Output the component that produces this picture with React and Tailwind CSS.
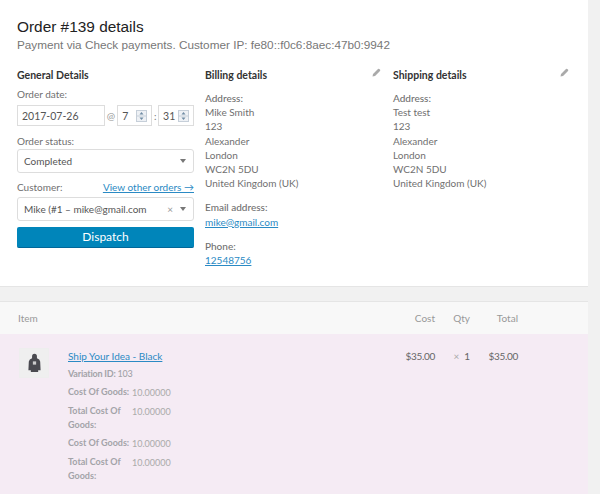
import React from "react";

const body = "font-['Lato',sans-serif]";

function Pencil() {
  return (
    <svg width="9" height="9" viewBox="0 0 9 9">
      <path d="M0.5 8.5 L1 6 L6 1 Q6.8 0.4 7.6 1.2 L8 1.6 Q8.6 2.4 8 3 L3 8 Z" fill="#aaa" />
    </svg>
  );
}

function Spinner() {
  return (
    <svg width="11" height="12" viewBox="0 0 11 12">
      <rect x="0.5" y="0.5" width="10" height="11" fill="#eef1f5" stroke="#c6cfd9" />
      <line x1="0.5" y1="6" x2="10.5" y2="6" stroke="#c6cfd9" />
      <path d="M5.5 2 L7.5 4.5 L3.5 4.5 Z" fill="#6f8ba4" />
      <path d="M5.5 10 L7.5 7.5 L3.5 7.5 Z" fill="#6f8ba4" />
    </svg>
  );
}

function Caret() {
  return <span className="w-0 h-0 border-x-[3.5px] border-x-transparent border-t-[4px] border-t-[#777]" />;
}

function Address({ lines }) {
  return (
    <div>
      <p className="font-medium">Address:</p>
      {lines.map((line, i) => (
        <p key={i}>{line}</p>
      ))}
    </div>
  );
}

function Meta({ label, value }) {
  return (
    <div className="flex gap-[2px] leading-[14px]">
      <span className="w-[62px] shrink-0 text-[9px] font-bold text-[#a3a3a8]">{label}</span>
      <span className="pt-[1px] text-[9px] text-[#aaa]">{value}</span>
    </div>
  );
}

export default function App() {
  return (
    <div className={`${body} w-[600px] h-[494px] overflow-hidden bg-[#f1f1f1] text-[10px] leading-[14.2px] text-[#707070]`}>
      {/* Order details */}
      <section className="w-[588px] h-[287px] bg-white border-b border-[#e5e5e5] px-[17px] pt-[18px]">
        <h1 className="font-['Liberation_Sans',sans-serif] text-[15.4px] leading-[18px] text-[#222]">Order #139 details</h1>
        <p className="font-['Liberation_Sans',sans-serif] text-[11.75px] leading-[17px] text-[#777]">
          Payment via Check payments. Customer IP: fe80::f0c6:8aec:47b0:9942
        </p>

        <div className="grid grid-cols-[177px_177px_178px] gap-x-[11px] mt-[15px]">
          <div className="flex flex-col">
            <h3 className="text-[10.5px] font-bold text-[#333] leading-[14px]">General Details</h3>
            <label className="mt-[5px]">Order date:</label>
            <div className="flex items-center mt-[4px] h-[21px]">
              <div className="w-[88px] h-full border border-[#ddd] flex items-center pl-[4px] text-[10.5px] text-[#555]">2017-07-26</div>
              <span className="mx-[2px] text-[#999]">@</span>
              <div className="w-[35px] h-full border border-[#ddd] flex items-center justify-between px-[4px] text-[10.5px] text-[#555]">
                7 <Spinner />
              </div>
              <span className="mx-[2px] w-[2px] text-[#777]">:</span>
              <div className="w-[36px] h-full border border-[#ddd] flex items-center justify-between px-[4px] text-[10.5px] text-[#555]">
                31 <Spinner />
              </div>
            </div>
            <label className="mt-[8px]">Order status:</label>
            <div className="flex items-center justify-between mt-[1px] h-[24px] border border-[#ddd] rounded-[3px] pl-[6px] pr-[7px] text-[#555]">
              Completed <Caret />
            </div>
            <div className="flex justify-between mt-[7px]">
              <label>Customer:</label>
              <a className="text-[#2a8ac4] underline">View other orders →</a>
            </div>
            <div className="flex items-center mt-[2px] h-[24px] border border-[#ddd] rounded-[3px] pl-[6px] pr-[7px] text-[#555]">
              <span className="flex-1">Mike (#1 – mike@gmail.com</span>
              <span className="text-[#999] mr-[7px]">×</span>
              <Caret />
            </div>
            <button className="mt-[6px] h-[21px] bg-[#0085ba] border-b border-[#006799] rounded-[2px] text-white text-[12px]">Dispatch</button>
          </div>

          <div>
            <div className="flex justify-between pr-[1px]">
              <h3 className="text-[10.5px] font-bold text-[#333] leading-[14px]">Billing details</h3>
              <Pencil />
            </div>
            <div className="mt-[9px]">
              <Address lines={["Mike Smith", "123", "Alexander", "London", "WC2N 5DU", "United Kingdom (UK)"]} />
              <p className="mt-[10px] font-medium">Email address:</p>
              <a className="text-[#2a8ac4] underline">mike@gmail.com</a>
              <p className="mt-[10px] font-medium">Phone:</p>
              <a className="text-[#2a8ac4] underline">12548756</a>
            </div>
          </div>

          <div>
            <div className="flex justify-between pr-[2px]">
              <h3 className="text-[10.5px] font-bold text-[#333] leading-[14px]">Shipping details</h3>
              <Pencil />
            </div>
            <div className="mt-[9px]">
              <Address lines={["Test test", "123", "Alexander", "London", "WC2N 5DU", "United Kingdom (UK)"]} />
            </div>
          </div>
        </div>
      </section>

      {/* Line items */}
      <section className="w-[588px] mt-[14px] border-t border-[#e5e5e5]">
        <div className="flex items-center h-[32px] bg-[#f8f8f8] pl-[18px] text-[#999]">
          <span className="flex-1">Item</span>
          <span className="w-[30px] text-right">Cost</span>
          <span className="w-[35px] text-right">Qty</span>
          <span className="w-[48px] text-right mr-[70px]">Total</span>
        </div>
        <div className="flex h-[160px] bg-[#f5ebf4] pl-[19px] pt-[14px]">
          <div className="w-[30px] h-[30px] bg-[#efefef] flex items-center justify-center shrink-0 border border-[#eee]">
            <svg width="13" height="22" viewBox="0 0 16 24">
              <path d="M8 0.5 Q11 0.5 11 4 L11 6 Q14.5 7 15 10 L15.5 21 L12.5 21 L12.5 23 L3.5 23 L3.5 21 L0.5 21 L1 10 Q1.5 7 5 6 L5 4 Q5 0.5 8 0.5 Z" fill="#4a4a50" />
              <rect x="6" y="10" width="4" height="4" fill="#ccc" />
            </svg>
          </div>
          <div className="ml-[19px] w-[130px] flex flex-col shrink-0">
            <a className="text-[#2a8ac4] underline leading-[16px]">Ship Your Idea - Black</a>
            <p className="mt-[3px] text-[9px] tracking-[-0.2px] leading-[14px] text-[#a3a3a8] font-bold">
              Variation ID: <span className="font-medium">103</span>
            </p>
            <div className="mt-[4px] flex flex-col gap-[4px]">
              <Meta label="Cost Of Goods:" value="10.00000" />
              <Meta label="Total Cost Of Goods:" value="10.00000" />
              <Meta label="Cost Of Goods:" value="10.00000" />
              <Meta label="Total Cost Of Goods:" value="10.00000" />
            </div>
          </div>
          <div className="flex-1 flex items-start justify-end text-[#666] mr-[70px] leading-[16px]">
            <span className="w-[40px] text-right tracking-[-0.3px]">$35.00</span>
            <span className="w-[35px] text-right">
              <span className="text-[#aaa] mr-[5px]">×</span>1
            </span>
            <span className="w-[48px] text-right tracking-[-0.3px]">$35.00</span>
          </div>
        </div>
      </section>
    </div>
  );
}
